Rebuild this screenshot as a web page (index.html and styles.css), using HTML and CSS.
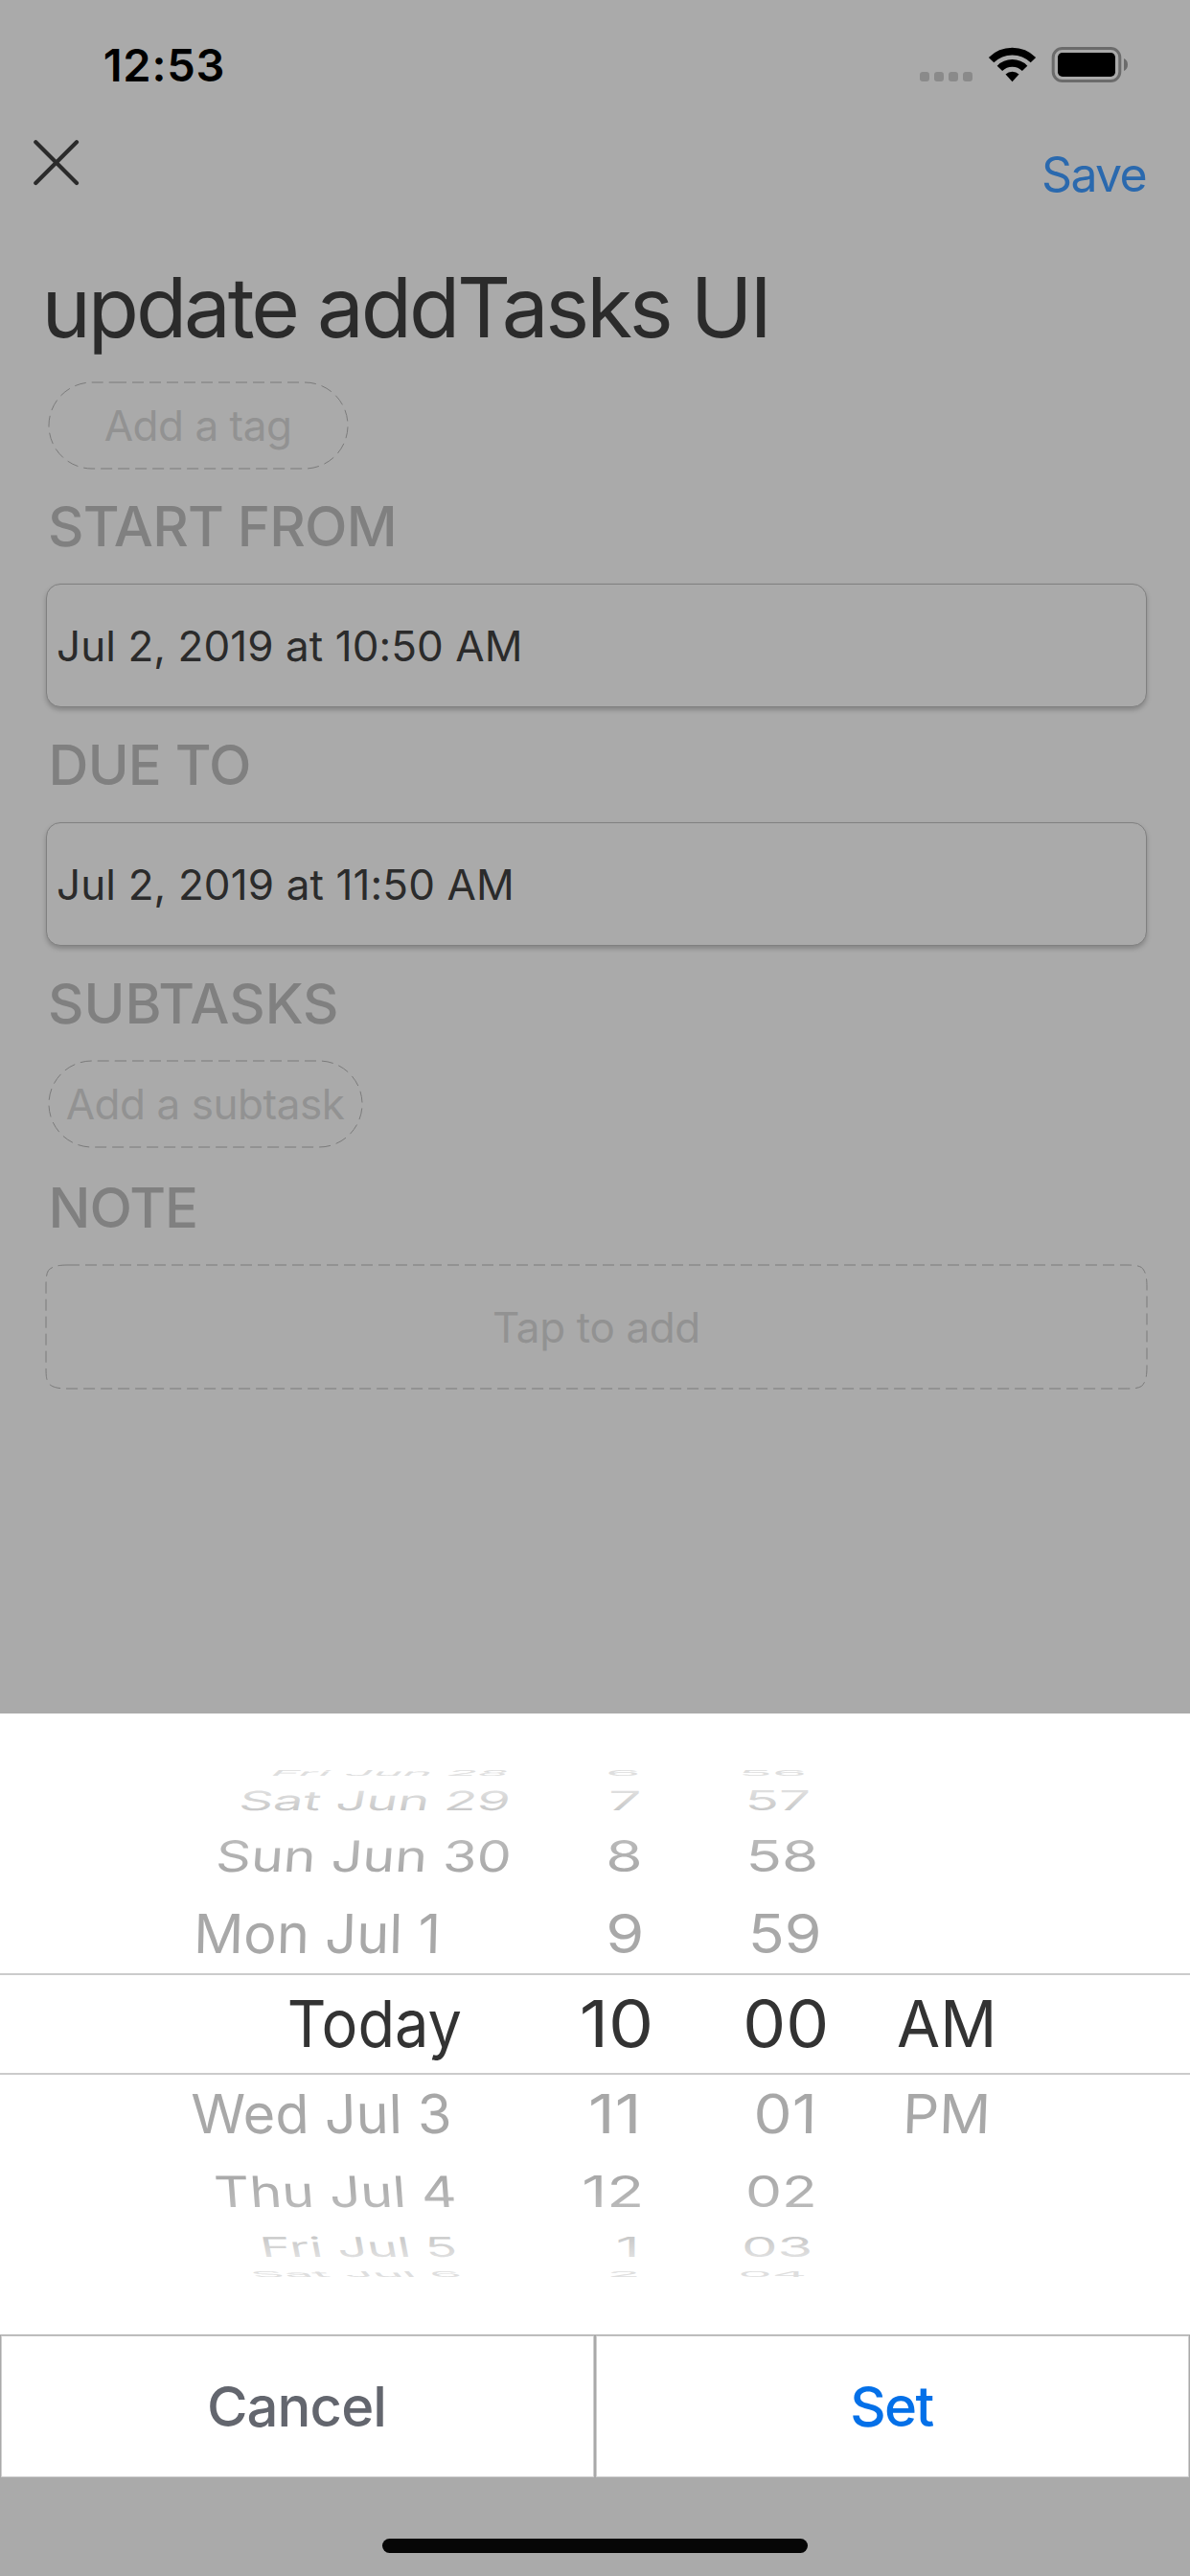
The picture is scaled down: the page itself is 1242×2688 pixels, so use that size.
FILE: index.html
```html
<!DOCTYPE html>
<html lang="en">
<head>
<meta charset="utf-8">
<title>Edit task</title>
<link rel="stylesheet" href="styles.css">
</head>
<body>
<main class="screen">
  <div class="status-bar">
    <span class="clock">12:53</span>
    <svg class="status-icons" width="218" height="40" viewBox="0 0 218 40">
      <g fill="#8a8a8a">
        <rect x="0" y="27" width="10" height="10" rx="3.2"/>
        <rect x="15" y="27" width="10" height="10" rx="3.2"/>
        <rect x="30" y="27" width="10" height="10" rx="3.2"/>
        <rect x="45" y="27" width="10" height="10" rx="3.2"/>
      </g>
      <g fill="none" stroke="#000" stroke-width="7.7">
        <path d="M74.6 14.6A31 31 0 0 1 118.4 14.6"/>
        <path d="M83.4 23.4A18.5 18.5 0 0 1 109.6 23.4"/>
      </g>
      <path d="M89.5 29.6A10 10 0 0 1 103.5 29.6L96.5 37.2Z"/>
      <rect x="139.2" y="2.5" width="69.6" height="34" rx="9.5" fill="none" stroke="#6b6b6b" stroke-width="3"/>
      <rect x="144" y="7" width="60" height="25" rx="4.8"/>
      <path d="M213 13C215.500 14 217 16.500 217 19.500S215.500 25 213 26Z" fill="#6b6b6b"/>
    </svg>
  </div>

  <nav class="nav">
    <svg class="close" width="48" height="48" viewBox="0 0 48 48">
      <path d="M2.300 2.300L45 45M45 2.300L2.300 45" fill="none" stroke="#2b2b2b" stroke-width="4.200" stroke-linecap="round"/>
    </svg>
    <span class="save">Save</span>
  </nav>

  <h1 class="title">update addTasks UI</h1>

  <div class="form">
    <div class="pill pill-tag">
      <svg class="dashes" width="312" height="90" viewBox="0 0 312 90">
        <path d="M69 0H267A45 45 0 0 1 267 90H45A45 45 0 0 1 45 0H69"/>
      </svg>
      <span>Add a tag</span>
    </div>

    <h2 class="label">START FROM</h2>
    <div class="field">Jul 2, 2019 at 10:50 AM</div>

    <h2 class="label label-tight">DUE TO</h2>
    <div class="field field-due">Jul 2, 2019 at 11:50 AM</div>

    <h2 class="label label-subtasks">SUBTASKS</h2>
    <div class="pill pill-subtask">
      <svg class="dashes" width="327" height="90" viewBox="0 0 327 90">
        <path d="M69 0H282A45 45 0 0 1 282 90H45A45 45 0 0 1 45 0H69"/>
      </svg>
      <span>Add a subtask</span>
    </div>

    <h2 class="label label-note">NOTE</h2>
    <div class="note">
      <svg class="dashes" width="1149" height="129" viewBox="0 0 1149 129">
        <path d="M23 0H1126C1136.700 0 1139.400 0.500 1143.400 2.500C1146.500 5.600 1149 9.600 1149 23V106C1149 119.400 1146.500 123.400 1143.400 126.500C1139.400 128.500 1136.700 129 1126 129H23C9.600 129 5.600 126.500 2.500 123.400C0.500 119.400 0 116.700 0 106V23C0 12.300 0.500 9.600 2.500 5.600C5.600 2.500 9.600 0 23 0"/>
      </svg>
      <span>Tap to add</span>
    </div>
  </div>
</main>

<section class="sheet">
  <div class="wheel">
    <svg width="0" height="0" class="defs">
      <linearGradient id="far-up" x1="0" y1=".2" x2="0" y2=".8"><stop stop-color="#dfdfdf"/><stop offset="1" stop-color="#c8c8c8"/></linearGradient>
      <linearGradient id="mid-up" x1="0" y1=".2" x2="0" y2=".8"><stop stop-color="#bababa"/><stop offset="1" stop-color="#a9a9a9"/></linearGradient>
      <linearGradient id="mid-down" x1="0" y1=".2" x2="0" y2=".8"><stop stop-color="#a9a9a9"/><stop offset="1" stop-color="#bababa"/></linearGradient>
      <linearGradient id="far-down" x1="0" y1=".2" x2="0" y2=".8"><stop stop-color="#c8c8c8"/><stop offset="1" stop-color="#dfdfdf"/></linearGradient>
    </svg>
    <svg class="row" width="1242" height="16" fill="#dedede">
      <text transform="matrix(.77 0 -.13 .12 280 11)">Fri Jun 28</text>
      <text transform="matrix(.869 0 0 .12 632.1 11)">6</text>
      <text transform="matrix(.861 0 0 .12 770.4 11)">56</text>
    </svg>
    <svg class="row" width="1242" height="42" fill="url(#far-up)">
      <text transform="matrix(.82 0 -.08 .41 248 31)">Sat Jun 29</text>
      <text transform="matrix(.894 0 -.02 .41 634.3 31)">7</text>
      <text transform="matrix(.86 0 0 .41 777.5 31)">57</text>
    </svg>
    <svg class="row" width="1242" height="75" fill="url(#mid-up)">
      <text transform="matrix(.842 0 -.05 .66 224.200 53)">Sun Jun 30</text>
      <text transform="matrix(.914 0 0 .66 632.3 53)">8</text>
      <text transform="matrix(.909 0 0 .66 778.5 53)">58</text>
    </svg>
    <svg class="row" width="1242" height="84" fill="#a8a8a8">
      <text transform="matrix(.849 0 -.02 .83 201.700 63)">Mon Jul 1</text>
      <text transform="matrix(.951 0 0 .83 632.2 63)">9</text>
      <text transform="matrix(.92 0 0 .83 780.8 63)">59</text>
    </svg>
    <svg class="row selected" width="1242" height="102" fill="#333">
      <text transform="matrix(.928 0 0 1 299.800 75)">Today</text>
      <text transform="matrix(1.1 0 0 1 604.7 75)">10</text>
      <text transform="matrix(1.048 0 0 1 775.2 75)">00</text>
      <text transform="matrix(.962 0 0 1 936 75)">AM</text>
    </svg>
    <svg class="row" width="1242" height="80" fill="#a8a8a8">
      <text transform="matrix(.848 0 .02 .83 200.200 61.300)">Wed Jul 3</text>
      <text transform="matrix(1 0 0 .83 614 61.300)">11</text>
      <text transform="matrix(.936 0 -.01 .83 786.3 61.300)">01</text>
      <text transform="matrix(.874 0 -.03 .83 941.6 61.300)">PM</text>
    </svg>
    <svg class="row" width="1242" height="75" fill="url(#mid-down)">
      <text transform="matrix(.836 0 .05 .655 225 58)">Thu Jul 4</text>
      <text transform="matrix(.941 0 0 .655 607.2 58)">12</text>
      <text transform="matrix(.887 0 0 .655 777.9 58)">02</text>
    </svg>
    <svg class="row" width="1242" height="42" fill="url(#far-down)">
      <text transform="matrix(.8 0 .08 .42 273.500 34.700)">Fri Jul 5</text>
      <text transform="matrix(.9 0 0 .42 642.8 34.700)">1</text>
      <text transform="matrix(.876 0 0 .42 773.9 34.700)">03</text>
    </svg>
    <svg class="row" width="1242" height="18" fill="#dedede">
      <text transform="matrix(.785 0 .11 .12 264.500 14)">Sat Jul 6</text>
      <text transform="matrix(.844 0 0 .12 633.4 14)">2</text>
      <text transform="matrix(.83 0 0 .12 770.2 14)">04</text>
    </svg>
  </div>
  <div class="actions">
    <div class="button cancel">Cancel</div>
    <div class="button set">Set</div>
  </div>
</section>

<footer class="home"><div class="home-bar"></div></footer>
</body>
</html>
```
FILE: styles.css
```css
* {
  box-sizing: border-box;
}

body {
  margin: 0;
  width: 1242px;
  height: 2688px;
  overflow: hidden;
  background: #aaa;
  font-family: Inter, "Liberation Sans", sans-serif;
  color: #2b2b2b;
  white-space: nowrap;
}

svg {
  display: block;
  flex: none;
}

.screen {
  height: 1788px;
}

.status-bar {
  display: flex;
  align-items: center;
  justify-content: space-between;
  height: 136px;
  padding: 0 64px 0 107.7px;
}

.clock {
  font-size: 47px;
  font-weight: 600;
  line-height: 136px;
  letter-spacing: .77px;
  color: #000;
}

.nav {
  display: flex;
  align-items: flex-start;
  justify-content: space-between;
  height: 68px;
  padding: 0 46px 0 35px;
}

.close {
  margin-top: 10px;
}

.save {
  margin-top: 16px;
  font-size: 50px;
  line-height: 60px;
  letter-spacing: -1.7px;
  color: #2a69ae;
}

.title {
  margin: 62px 0 0 43.5px;
  font-size: 87px;
  font-weight: 400;
  line-height: 110px;
  letter-spacing: -3.15px;
}

.form {
  display: flex;
  flex-direction: column;
  padding: 23px 45px 0 48px;
}

.pill,
.note {
  position: relative;
  font-size: 44px;
  color: #929292;
}

.pill {
  height: 90px;
  margin-left: 3px;
  line-height: 90px;
}

.pill-tag {
  width: 312px;
  padding-left: 57.7px;
  letter-spacing: -.46px;
}

.pill-subtask {
  width: 327px;
  padding-left: 17.7px;
  letter-spacing: -.45px;
}

/* Dashed outlines drawn over the box edges */
.dashes {
  position: absolute;
  left: 0;
  top: 0;
  overflow: visible;
  fill: none;
  stroke: #7b7b7b;
  stroke-width: 1;
  stroke-dasharray: 12 6;
}

.label {
  margin: 25px 0 25px 2px;
  font-size: 58px;
  font-weight: 500;
  line-height: 70px;
  letter-spacing: -.77px;
  color: #808080;
}

.label-tight {
  margin-left: 2.6px;
}

.label-subtasks {
  letter-spacing: .05px;
}

.label-note {
  margin: 28px 0 25px 2.6px;
  letter-spacing: -1px;
}

.field {
  height: 129px;
  padding-left: 10px;
  border: 1px solid #808080;
  border-radius: 15px;
  background: #aaa;
  box-shadow: 0 3px 5px rgba(0, 0, 0, .22);
  font-size: 44px;
  line-height: 128px;
  letter-spacing: .07px;
}

.field-due {
  letter-spacing: .12px;
}

.note {
  height: 129px;
  line-height: 130px;
  letter-spacing: -.36px;
  text-align: center;
}

.sheet {
  background: #fff;
}

.wheel {
  height: 648px;
  padding-top: 54px;
}

.defs {
  height: 0;
}

.row {
  font-size: 68px;
}

.selected {
  box-sizing: content-box;
  border: solid #cbcbcb;
  border-width: 2px 0;
}

.actions {
  display: grid;
  grid-template-columns: 1fr 1fr;
  height: 150px;
}

.button {
  padding-right: 2px;
  border: 1px solid #a9a9a9;
  box-shadow: inset 0 0 0 1px #d0d0d0;
  font-size: 58px;
  line-height: 148px;
  text-align: center;
}

.cancel {
  font-weight: 500;
  letter-spacing: -.9px;
  color: #63666e;
}

.set {
  font-weight: 550;
  letter-spacing: -1.6px;
  color: #0470e8;
}

.home {
  height: 102px;
  padding-top: 63px;
}

.home-bar {
  width: 444px;
  height: 15px;
  margin: 0 auto;
  border-radius: 7.5px;
  background: #060606;
}
```
